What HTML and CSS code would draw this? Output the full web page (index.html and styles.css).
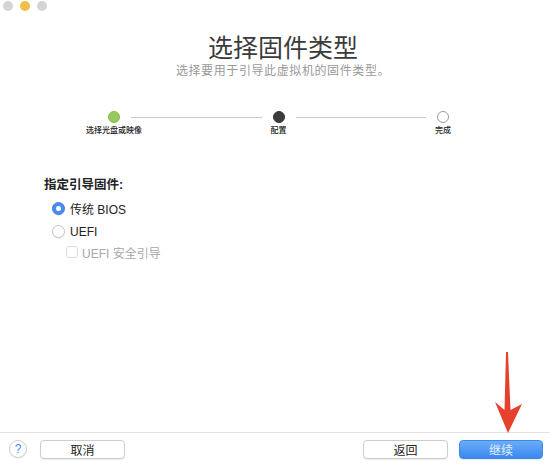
FILE: index.html
```html
<!DOCTYPE html>
<html>
<head>
    <title>选择固件类型</title>
    <link rel="stylesheet" href="styles.css">
</head>
<body>
    <div class="window">
        <div class="titlebar">
            <span class="light"></span>
            <span class="light yellow"></span>
            <span class="light"></span>
        </div>

        <div class="header">
            <h1>选择固件类型</h1>
            <p>选择要用于引导此虚拟机的固件类型。</p>
        </div>

        <div class="stepper">
            <div class="step">
                <span class="dot done"></span>
                <span class="step-label">选择光盘或映像</span>
            </div>
            <div class="step-line"></div>
            <div class="step">
                <span class="dot current"></span>
                <span class="step-label">配置</span>
            </div>
            <div class="step-line"></div>
            <div class="step">
                <span class="dot"></span>
                <span class="step-label">完成</span>
            </div>
        </div>

        <div class="form">
            <div class="form-title">指定引导固件:</div>
            <label class="option"><span class="radio checked"></span>传统 BIOS</label>
            <label class="option"><span class="radio"></span>UEFI</label>
            <label class="option sub disabled"><span class="checkbox"></span>UEFI 安全引导</label>
        </div>

        <div class="spacer"></div>

        <div class="footer">
            <span class="help">?</span>
            <button class="btn">取消</button>
            <div class="spacer"></div>
            <button class="btn">返回</button>
            <button class="btn primary">继续</button>
        </div>

        <!-- pointer drawn over the continue button -->
        <svg class="arrow" width="40" height="90" viewBox="0 0 40 90">
            <path d="M16 2 L18 2 L20.5 60 L32 54 L18 83 L5 52 L14.5 60 Z" fill="#e6412c"/>
        </svg>
    </div>
</body>
</html>
```

FILE: styles.css
```css
body { margin: 0; background: #fff; font-family: "Liberation Sans", "Noto Sans CJK SC", sans-serif; color: #333; }
.window { position: relative; width: 550px; height: 465px; display: flex; flex-direction: column; overflow: hidden; }

.titlebar { height: 12px; display: flex; gap: 7px; padding: 1px 0 0 3px; box-sizing: border-box; }
.light { width: 10px; height: 10px; border-radius: 50%; background: #d4d4d4; }
.light.yellow { background: #f0c04a; }

.header { margin-top: 21px; padding-left: 16px; text-align: center; }
.header h1 { margin: 0; font-size: 25px; line-height: 30px; font-weight: normal; color: #3b3b3b; }
.header p { margin: 0; font-size: 12px; line-height: 16px; color: #999; letter-spacing: 0.6px; }

.stepper { display: flex; align-items: flex-start; margin: 32px 0 0 108px; width: 341px; }
.step { width: 12px; display: flex; flex-direction: column; align-items: center; }
.dot { width: 12px; height: 12px; border-radius: 50%; box-sizing: border-box; border: 1px solid #9a9a9a; background: #fff; }
.dot.done { background: #97c95c; border-color: #86b84e; }
.dot.current { background: #3c3c3c; border-color: #333; }
.step-label { margin-top: 2px; font-size: 8px; line-height: 12px; white-space: nowrap; color: #222; font-weight: 500; }
.step-line { flex: 1; height: 1px; background: #c9c9c9; margin: 6px 11px 0; }

.form { margin: 40px 0 0 44px; font-size: 12px; }
.form-title { line-height: 16px; font-size: 12.5px; font-weight: bold; color: #222; margin-bottom: 4px; }
.option { display: flex; align-items: center; gap: 5px; height: 23px; margin-left: 8px; color: #222; }
.option.sub { height: 18px; margin-left: 22px; gap: 4px; }
.option.disabled { color: #a8a8a8; }
.radio { width: 13px; height: 13px; border-radius: 50%; box-sizing: border-box; border: 1px solid #c4c4c4; background: #fff; box-shadow: 0 1px 1px rgba(0,0,0,0.08); position: relative; }
.radio.checked { background: #4a8cf0; border-color: #3f7fe2; }
.radio.checked::after { content: ""; position: absolute; left: 3px; top: 3px; width: 5px; height: 5px; border-radius: 50%; background: #fff; }
.checkbox { width: 12px; height: 12px; border-radius: 3px; box-sizing: border-box; border: 1px solid #dcdcdc; background: #fff; }

.spacer { flex: 1; }

.footer { height: 33px; border-top: 1px solid #e2e2e2; display: flex; align-items: center; padding: 0 7px 0 9px; box-sizing: border-box; }
.help { width: 18px; height: 18px; border-radius: 50%; box-sizing: border-box; border: 1px solid #cfcfcf; background: #fff; color: #4a8cf0; font-size: 12px; line-height: 16px; text-align: center; margin-right: 13px; box-shadow: 0 1px 1px rgba(0,0,0,0.06); }
.btn { width: 85px; height: 19px; padding: 0; border: 1px solid #cdcdcd; border-radius: 4px; background: #fff; font-family: inherit; font-size: 12px; color: #222; box-shadow: 0 1px 1px rgba(0,0,0,0.08); }
.btn + .btn { margin-left: 11px; }
.spacer + .btn { margin-left: 0; }
.btn.primary { width: 84px; border-color: #3c86ec; background: linear-gradient(#6aadf8, #3a87ef); color: #e4eefc; }

.arrow { position: absolute; left: 490px; top: 350px; }
```
